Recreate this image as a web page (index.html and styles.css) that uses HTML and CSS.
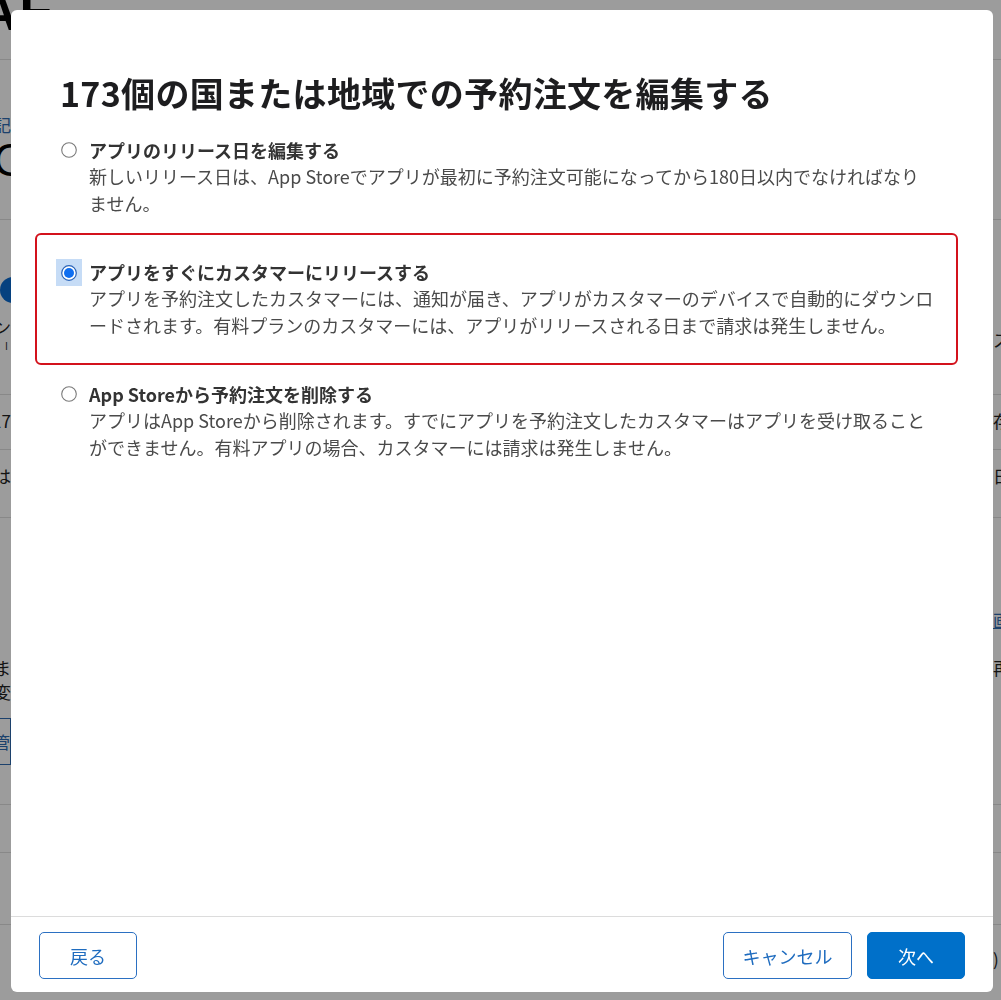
FILE: index.html
```html
<!DOCTYPE html>
<html lang="ja">
<head>
<meta charset="utf-8">
<title>予約注文を編集する</title>
<link rel="stylesheet" href="styles.css">
</head>
<body>
<div class="page">
  <div class="row r1"><span class="big">AE</span><span class="rt"></span></div>
  <div class="row r2">
    <div class="lt"><span class="blue small t1">登録記</span><span class="bigo">O</span></div>
    <div class="rt"></div>
  </div>
  <div class="row r3">
    <div class="lt"><span class="dot"></span><span class="small t3">バージョン</span><span class="tiny">APP I</span></div>
    <div class="rt"><span class="small t3r">ス</span></div>
  </div>
  <div class="row r4"><div class="lt"><span class="small">2017</span></div><div class="rt"><span class="small">存</span></div></div>
  <div class="row r5"><div class="lt"><span class="small">には</span></div><div class="rt"><span class="small">日</span></div></div>
  <div class="row r6">
    <div class="lt"><span class="small t6a">注文はま</span><span class="small">更変</span><span class="boxbtn">管</span></div>
    <div class="rt"><span class="small blue under t6r">画</span><span class="small">再</span></div>
  </div>
  <div class="row r7"></div>
  <div class="row r8"></div>
  <div class="row r9"><div class="lt"></div><div class="rt"><span class="small t9">)</span></div></div>
</div>

<div class="overlay">
  <div class="modal">
    <div class="modal-body">
      <h1 class="title">173個の国または地域での予約注文を編集する</h1>

      <div class="option">
        <span class="radio"><svg width="16" height="16" viewBox="0 0 16 16"><circle cx="8" cy="8" r="7.3" fill="#fff" stroke="#7a7a7a" stroke-width="1.1"/></svg></span>
        <div class="opt-text">
          <div class="opt-label">アプリのリリース日を編集する</div>
          <div class="opt-desc">新しいリリース日は、App Storeでアプリが最初に予約注文可能になってから180日以内でなければなり<br>ません。</div>
        </div>
      </div>

      <div class="option selected">
        <span class="radio focus"><svg width="16" height="16" viewBox="0 0 16 16"><circle cx="8" cy="8" r="7.3" fill="#fff" stroke="#2a63b8" stroke-width="1.2"/><circle cx="8" cy="8" r="5" fill="#0f6ef0"/></svg></span>
        <div class="opt-text">
          <div class="opt-label">アプリをすぐにカスタマーにリリースする</div>
          <div class="opt-desc">アプリを予約注文したカスタマーには、通知が届き、アプリがカスタマーのデバイスで自動的にダウンロ<br>ードされます。有料プランのカスタマーには、アプリがリリースされる日まで請求は発生しません。</div>
        </div>
      </div>

      <div class="option">
        <span class="radio"><svg width="16" height="16" viewBox="0 0 16 16"><circle cx="8" cy="8" r="7.3" fill="#fff" stroke="#7a7a7a" stroke-width="1.1"/></svg></span>
        <div class="opt-text">
          <div class="opt-label">App Storeから予約注文を削除する</div>
          <div class="opt-desc">アプリはApp Storeから削除されます。すでにアプリを予約注文したカスタマーはアプリを受け取ること<br>ができません。有料アプリの場合、カスタマーには請求は発生しません。</div>
        </div>
      </div>
    </div>

    <div class="modal-footer">
      <button class="btn">戻る</button>
      <div class="spacer"></div>
      <button class="btn cancel">キャンセル</button>
      <button class="btn primary">次へ</button>
    </div>
  </div>
</div>
</body>
</html>
```

FILE: styles.css
```css
html, body {
  margin: 0;
  padding: 0;
}
body {
  width: 1001px;
  height: 1000px;
  overflow: hidden;
  background: #fff;
  font-family: "Noto Sans CJK JP", "Noto Sans", sans-serif;
  color: #1d1d1f;
}

/* background page */
.page {
  display: flex;
  flex-direction: column;
  width: 1001px;
}
.row {
  display: flex;
  justify-content: space-between;
  border-bottom: 1px solid #dedede;
  box-sizing: border-box;
  overflow: hidden;
}
.r1 { height: 60px; }
.r2 { height: 160px; }
.r3 { height: 175px; }
.r4 { height: 55px; }
.r5 { height: 68px; }
.r6 { height: 287px; }
.r7 { height: 48px; }
.r8 { height: 72px; }
.r9 { height: 75px; border-bottom: none; }

.big {
  font-family: "Liberation Sans", Arial, sans-serif;
  font-weight: 700;
  font-size: 52px;
  line-height: 52px;
  margin-top: -14px;
  margin-left: -20px;
  letter-spacing: 2px;
  color: #000;
}
.lt {
  width: 60px;
  margin-left: -49px;
  display: flex;
  flex-direction: column;
  align-items: flex-end;
  text-align: right;
  white-space: nowrap;
}
.rt {
  width: 60px;
  margin-right: -52px;
  display: flex;
  flex-direction: column;
  align-items: flex-start;
  white-space: nowrap;
}
.small {
  font-size: 17px;
  line-height: 24px;
  color: #222;
}
.tiny {
  font-size: 10px;
  letter-spacing: 3px;
  line-height: 14px;
  color: #333;
}
.blue { color: #2e6ab1; }
.under { text-decoration: underline; }
.t1 { margin-top: 53px; }
.bigo {
  font-family: "Liberation Sans", Arial, sans-serif;
  font-size: 46px;
  line-height: 46px;
  color: #000;
  margin-right: -18px;
}
.dot {
  width: 26px;
  height: 26px;
  border-radius: 50%;
  background: #0b6bd0;
  margin-top: 57px;
  margin-right: -15px;
}
.t3 { margin-top: 12px; }
.t3r { margin-top: 108px; }
.r4 .small, .r5 .small { margin-top: 14px; }
.t6a { margin-top: 138px; }
.boxbtn {
  margin-top: 14px;
  border: 1px solid #2e6ab1;
  height: 45px;
  line-height: 45px;
  width: 40px;
  text-align: right;
  color: #2e6ab1;
  font-size: 17px;
}
.t6r { margin-top: 90px; margin-bottom: 24px; }
.t9 { margin-top: 22px; }

/* overlay + modal */
.overlay {
  position: fixed;
  inset: 0;
  background: rgba(0, 0, 0, 0.39);
  padding: 10px 8px 8px 11px;
  box-sizing: border-box;
  display: flex;
}
.modal {
  flex: 1;
  background: #fff;
  border-radius: 6px;
  display: flex;
  flex-direction: column;
  overflow: hidden;
}
.modal-body {
  flex: 1;
  padding: 61px 36px 0 49px;
}
.title {
  margin: 0 0 22px;
  font-size: 34px;
  line-height: 44px;
  font-weight: 700;
  color: #1d1d1f;
  letter-spacing: 0.3px;
}
.option {
  display: flex;
  align-items: flex-start;
  margin-bottom: 43px;
}
.option.selected {
  border: 2px solid #d3121c;
  border-radius: 6px;
  margin: -26px -1px 16px -25px;
  padding: 24px 0 25px 23px;
}
.radio {
  width: 26px;
  height: 26px;
  margin-left: -4px;
  margin-right: 7px;
  flex: none;
  display: flex;
  align-items: center;
  justify-content: center;
}
.radio svg { display: block; }
.radio.focus {
  background: #c6dcf6;
  height: 27px;
}
.opt-text {
  white-space: nowrap;
}
.opt-label {
  font-size: 18px;
  line-height: 26px;
  font-weight: 700;
  color: #333;
}
.opt-desc {
  font-size: 18px;
  line-height: 26.5px;
  color: #4a4a4a;
}

.modal-footer {
  border-top: 1px solid #dcdcdc;
  display: flex;
  align-items: center;
  padding: 15px 28px 13px;
  gap: 15px;
}
.spacer { flex: 1; }
.btn {
  height: 47px;
  width: 98px;
  border: 1px solid #2b70c2;
  border-radius: 5px;
  background: #fff;
  color: #1f6cbf;
  font-family: "Noto Sans CJK JP", "Noto Sans", sans-serif;
  font-size: 18px;
  padding: 0;
  cursor: pointer;
}
.btn.cancel { width: 129px; }
.btn.primary {
  background: #0070c9;
  border-color: #0070c9;
  color: #fff;
}
```
